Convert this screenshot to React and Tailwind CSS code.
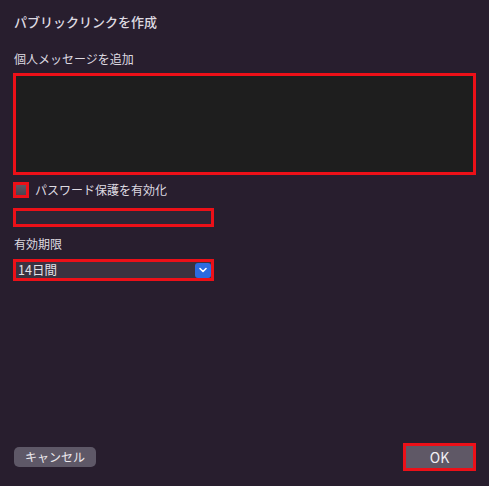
export default function App() {
  return (
    <div
      className="w-[489px] h-[486px] bg-[#281e2e] flex flex-col px-[13px] text-[#dedae1] overflow-hidden"
      style={{ fontFamily: '"Noto Sans CJK JP", "Noto Sans", sans-serif' }}
    >
      <div className="pt-[14px] text-[13px] leading-[16px] pl-px font-medium">パブリックリンクを作成</div>
      <div className="mt-[21px] text-[12px] leading-[16px] pl-px">個人メッセージを追加</div>
      <div className="mt-[6px] h-[102px] border-[3px] border-[#ec1018] bg-[#1e1e1e]" />
      <div className="mt-[7px] flex items-center h-[16px]">
        <div className="w-[16px] h-[16px] border-[3px] border-[#ec1018] bg-gradient-to-b from-[#5e5864] to-[#4a4450]" />
        <span className="ml-[6px] text-[12px] leading-[16px]">パスワード保護を有効化</span>
      </div>
      <div className="mt-[10px] w-[201px] h-[19px] border-[3px] border-[#ec1018] bg-[#2e2535]" />
      <div className="mt-[9px] text-[12px] leading-[16px] pl-px">有効期限</div>
      <div className="mt-[7px] w-[201px] h-[22px] border-[3px] border-[#ec1018] bg-[#3a3240] flex items-center justify-between pl-[2px] pr-0">
        <span className="text-[12.5px] leading-[16px] text-[#e4e1e6]">14日間</span>
        <div className="w-[16px] h-[15px] rounded-[3px] bg-[#2c6be0] flex items-center justify-center">
          <svg width="8" height="6" viewBox="0 0 8 6" fill="none">
            <path d="M1 1.5 L4 4.5 L7 1.5" stroke="white" strokeWidth="1.6" strokeLinecap="round" strokeLinejoin="round" />
          </svg>
        </div>
      </div>
      <div className="mt-auto mb-[15px] flex items-center justify-between">
        <button className="ml-px w-[82px] h-[20px] rounded-[5px] bg-[#5e5867] text-[12px] leading-[16px] text-[#ece9ee]">
          キャンセル
        </button>
        <button className="w-[73px] h-[28px] border-[3px] border-[#ec1018] bg-[#5f5866] text-[14px] leading-[16px] text-[#f2eff4]">
          OK
        </button>
      </div>
    </div>
  );
}
